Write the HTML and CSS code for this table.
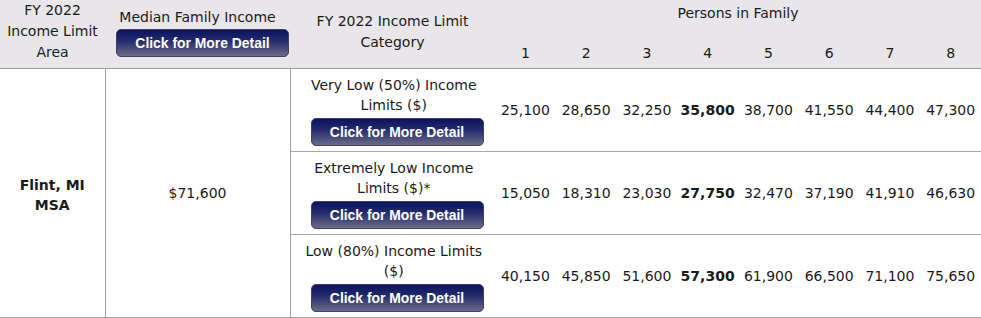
FILE: index.html
```html
<!DOCTYPE html>
<html>
<head>
<meta charset="utf-8">
<link rel="stylesheet" href="styles.css">
</head>
<body>
<table class="il">
  <colgroup>
    <col class="c-area"><col class="c-mfi"><col class="c-cat">
    <col class="c-n"><col class="c-n"><col class="c-n"><col class="c-n">
    <col class="c-n"><col class="c-n"><col class="c-n"><col class="c-n">
  </colgroup>
  <thead>
    <tr class="h-top">
      <th rowspan="2" class="h-area">FY 2022 Income Limit Area</th>
      <th rowspan="2" class="h-mfi">Median Family Income<button class="btn">Click for More Detail</button></th>
      <th rowspan="2" class="h-cat">FY 2022 Income Limit Category</th>
      <th colspan="8" class="h-persons">Persons in Family</th>
    </tr>
    <tr class="h-nums">
      <th>1</th><th>2</th><th>3</th><th>4</th><th>5</th><th>6</th><th>7</th><th>8</th>
    </tr>
  </thead>
  <tbody>
    <tr>
      <td rowspan="3" class="area">Flint, MI<br>MSA</td>
      <td rowspan="3" class="mfi">$71,600</td>
      <td class="cat">Very Low (50%) Income Limits ($)<button class="btn">Click for More Detail</button></td>
      <td>25,100</td><td>28,650</td><td>32,250</td><td class="b">35,800</td><td>38,700</td><td>41,550</td><td>44,400</td><td>47,300</td>
    </tr>
    <tr>
      <td class="cat">Extremely Low Income Limits ($)*<button class="btn">Click for More Detail</button></td>
      <td>15,050</td><td>18,310</td><td>23,030</td><td class="b">27,750</td><td>32,470</td><td>37,190</td><td>41,910</td><td>46,630</td>
    </tr>
    <tr>
      <td class="cat">Low (80%) Income Limits ($)<button class="btn">Click for More Detail</button></td>
      <td>40,150</td><td>45,850</td><td>51,600</td><td class="b">57,300</td><td>61,900</td><td>66,500</td><td>71,100</td><td>75,650</td>
    </tr>
  </tbody>
</table>
</body>
</html>
```
FILE: styles.css
```css
html, body {
  margin: 0;
  padding: 0;
  background: #fff;
}
body {
  font-family: "DejaVu Sans", Verdana, sans-serif;
  font-size: 14px;
  color: #1a1a1a;
}
.il {
  border-collapse: collapse;
  width: 981px;
  table-layout: fixed;
}
.c-area { width: 105px; }
.c-mfi { width: 185px; }
.c-cat { width: 205px; }
.il th {
  background: #e8e6e8;
  font-weight: normal;
  text-align: center;
  line-height: 21px;
  padding: 0;
}
.h-top { height: 36px; }
.h-nums { height: 31px; }
.h-area { padding: 0 2px 5px !important; }
.h-mfi { vertical-align: top; padding-top: 7px !important; }
.h-cat { padding-bottom: 4px !important; }
.h-persons { vertical-align: top; padding-top: 3px !important; }
.h-nums th { vertical-align: top; padding-top: 6px !important; }
thead tr:last-child th, .h-area, .h-mfi, .h-cat {
  border-bottom: 1px solid #9c9c9c;
}
.il td {
  text-align: center;
  line-height: 20px;
  padding: 0;
}
.il tbody tr + tr td {
  border-top: 1px solid #a8a8a8;
}
.il tbody tr:last-child td, .area, .mfi {
  border-bottom: 1px solid #a0a0a0;
}
.area {
  font-weight: bold;
  border-right: 1px solid #a0a0a0;
  padding-top: 3px !important;
}
.mfi {
  border-right: 1px solid #a0a0a0;
}
.il tbody tr + tr td.area, .il tbody tr + tr td.mfi { border-top: none; }
.cat {
  padding: 6px 10px 5px 12px !important;
  vertical-align: top;
}
.b { font-weight: bold; }
.btn {
  display: block;
  margin: 3px 0 0 8px;
  width: 173px;
  height: 28px;
  border: 1px solid #40406a;
  border-radius: 5px;
  background: linear-gradient(to bottom, #0a145e 0%, #232a6c 40%, #6a6a86 100%);
  color: #fff;
  font-family: "Liberation Sans", Arial, sans-serif;
  font-weight: bold;
  font-size: 13.9px;
  padding: 0;
  cursor: pointer;
}
.h-mfi .btn { margin: 1px 0 0 11px; }
```
